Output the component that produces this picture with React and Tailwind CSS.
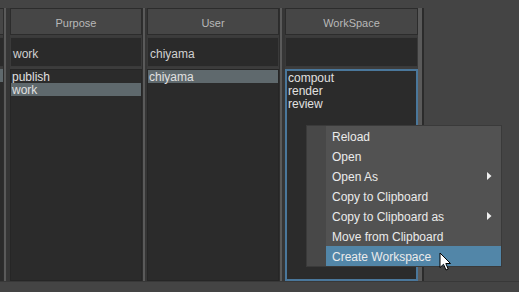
import React from "react";

const font = { fontFamily: '"Liberation Sans", Arial, sans-serif' };

function Handle({ w = "w-[6px]" }) {
  return (
    <div className={`flex h-full shrink-0 ${w}`}>
      <div className="w-px bg-[#2e2e2e]" />
      <div className="w-[2px] bg-[#5a5a5a]" />
      <div className="flex-1 bg-[#363636]" />
    </div>
  );
}

function Column({ title, filter, items, selected, focused, width }) {
  return (
    <div className={`flex h-full shrink-0 flex-col ${width}`}>
      <div className="flex h-[27px] shrink-0 items-center justify-center border border-[#2c2c2c] bg-[#464646] pt-[3px] text-[11px] text-[#b8b8b8]">
        {title}
      </div>
      <div className="h-[2px] shrink-0 bg-[#3c3c3c]" />
      <div className="flex h-[30px] shrink-0 items-center border border-[#3a3a3a] bg-[#2a2a2a] pl-[2px] pt-[3px] text-[12px] text-[#d0d0d0]">
        {filter}
      </div>
      <div className="h-[2px] shrink-0 bg-[#3c3c3c]" />
      <div
        className={`flex flex-1 flex-col bg-[#2b2b2b] ${
          focused ? "border-2 border-[#4a779b]" : "border border-[#262626]"
        }`}
      >
        {items.map((it) => (
          <div
            key={it}
            className={`h-[13px] pl-px text-[12px] leading-[14px] text-[#e0e0e0] ${
              it === selected ? "bg-[#5f696d]" : ""
            }`}
          >
            {it}
          </div>
        ))}
      </div>
    </div>
  );
}

function Arrow() {
  return (
    <svg width="5" height="8" viewBox="0 0 5 8" className="absolute right-[9px] top-[6px]">
      <path d="M0 0 L4.5 4 L0 8 Z" fill="#f0f0f0" />
    </svg>
  );
}

export default function App() {
  const menu = [
    { t: "Reload" },
    { t: "Open" },
    { t: "Open As", sub: true },
    { t: "Copy to Clipboard" },
    { t: "Copy to Clipboard as", sub: true },
    { t: "Move from Clipboard" },
    { t: "Create Workspace", hi: true },
  ];
  return (
    <div style={font} className="relative h-[292px] w-[519px] overflow-hidden bg-[#444444]">
      <div className="h-[8px]" />
      <div className="flex h-[273px]">
        {/* partial column */}
        <div className="flex h-full w-[3px] shrink-0 flex-col">
          <div className="h-[27px] shrink-0 border-y border-[#2c2c2c] bg-[#464646]" />
          <div className="h-[2px] shrink-0 bg-[#3c3c3c]" />
          <div className="h-[30px] shrink-0 border-y border-[#3a3a3a] bg-[#2a2a2a]" />
          <div className="h-[2px] shrink-0 bg-[#3c3c3c]" />
          <div className="flex-1 bg-[#2b2b2b]">
            <div className="h-[13px] bg-[#5f696d]" />
          </div>
        </div>
        <Handle w="w-[7px]" />
        <Column width="w-[132px]" title="Purpose" filter="work" items={["publish", "work"]} selected="work" />
        <Handle w="w-[5px]" />
        <Column width="w-[132px]" title="User" filter="chiyama" items={["chiyama"]} selected="chiyama" />
        <Handle w="w-[6px]" />
        <Column
          width="w-[133px]"
          title="WorkSpace"
          filter=""
          items={["compout", "render", "review"]}
          focused
        />
        <div className="flex h-full w-[6px] shrink-0">
          <div className="w-[4px] bg-[#5a5a5a]" />
          <div className="w-[2px] bg-[#2b2b2b]" />
        </div>
        <div className="flex-1" />
      </div>
      <div className="h-[11px] border-t border-[#383838] bg-[#444444]" />

      {/* context menu */}
      <div className="absolute left-[306px] top-[125px] flex w-[196px] border border-[#3a3a3a] bg-[#525252]">
        <div className="w-[19px] shrink-0 bg-[#484848]" />
        <div className="flex flex-1 flex-col">
          {menu.map((m) => (
            <div
              key={m.t}
              className={`relative flex h-[20px] items-center pl-[6px] pt-[2px] text-[12px] text-[#ebebeb] ${
                m.hi ? "bg-[#5286a8]" : ""
              }`}
            >
              {m.t}
              {m.sub && <Arrow />}
            </div>
          ))}
        </div>
      </div>

      {/* mouse cursor */}
      <svg
        width="13"
        height="20"
        viewBox="0 0 13 20"
        className="absolute left-[439px] top-[252px]"
      >
        <path
          d="M1 1 L1 15.5 L4.5 12.3 L7 18 L9.2 17 L6.8 11.5 L11.5 11.5 Z"
          fill="#ffffff"
          stroke="#000000"
          strokeWidth="1"
          strokeLinejoin="round"
        />
      </svg>
    </div>
  );
}
